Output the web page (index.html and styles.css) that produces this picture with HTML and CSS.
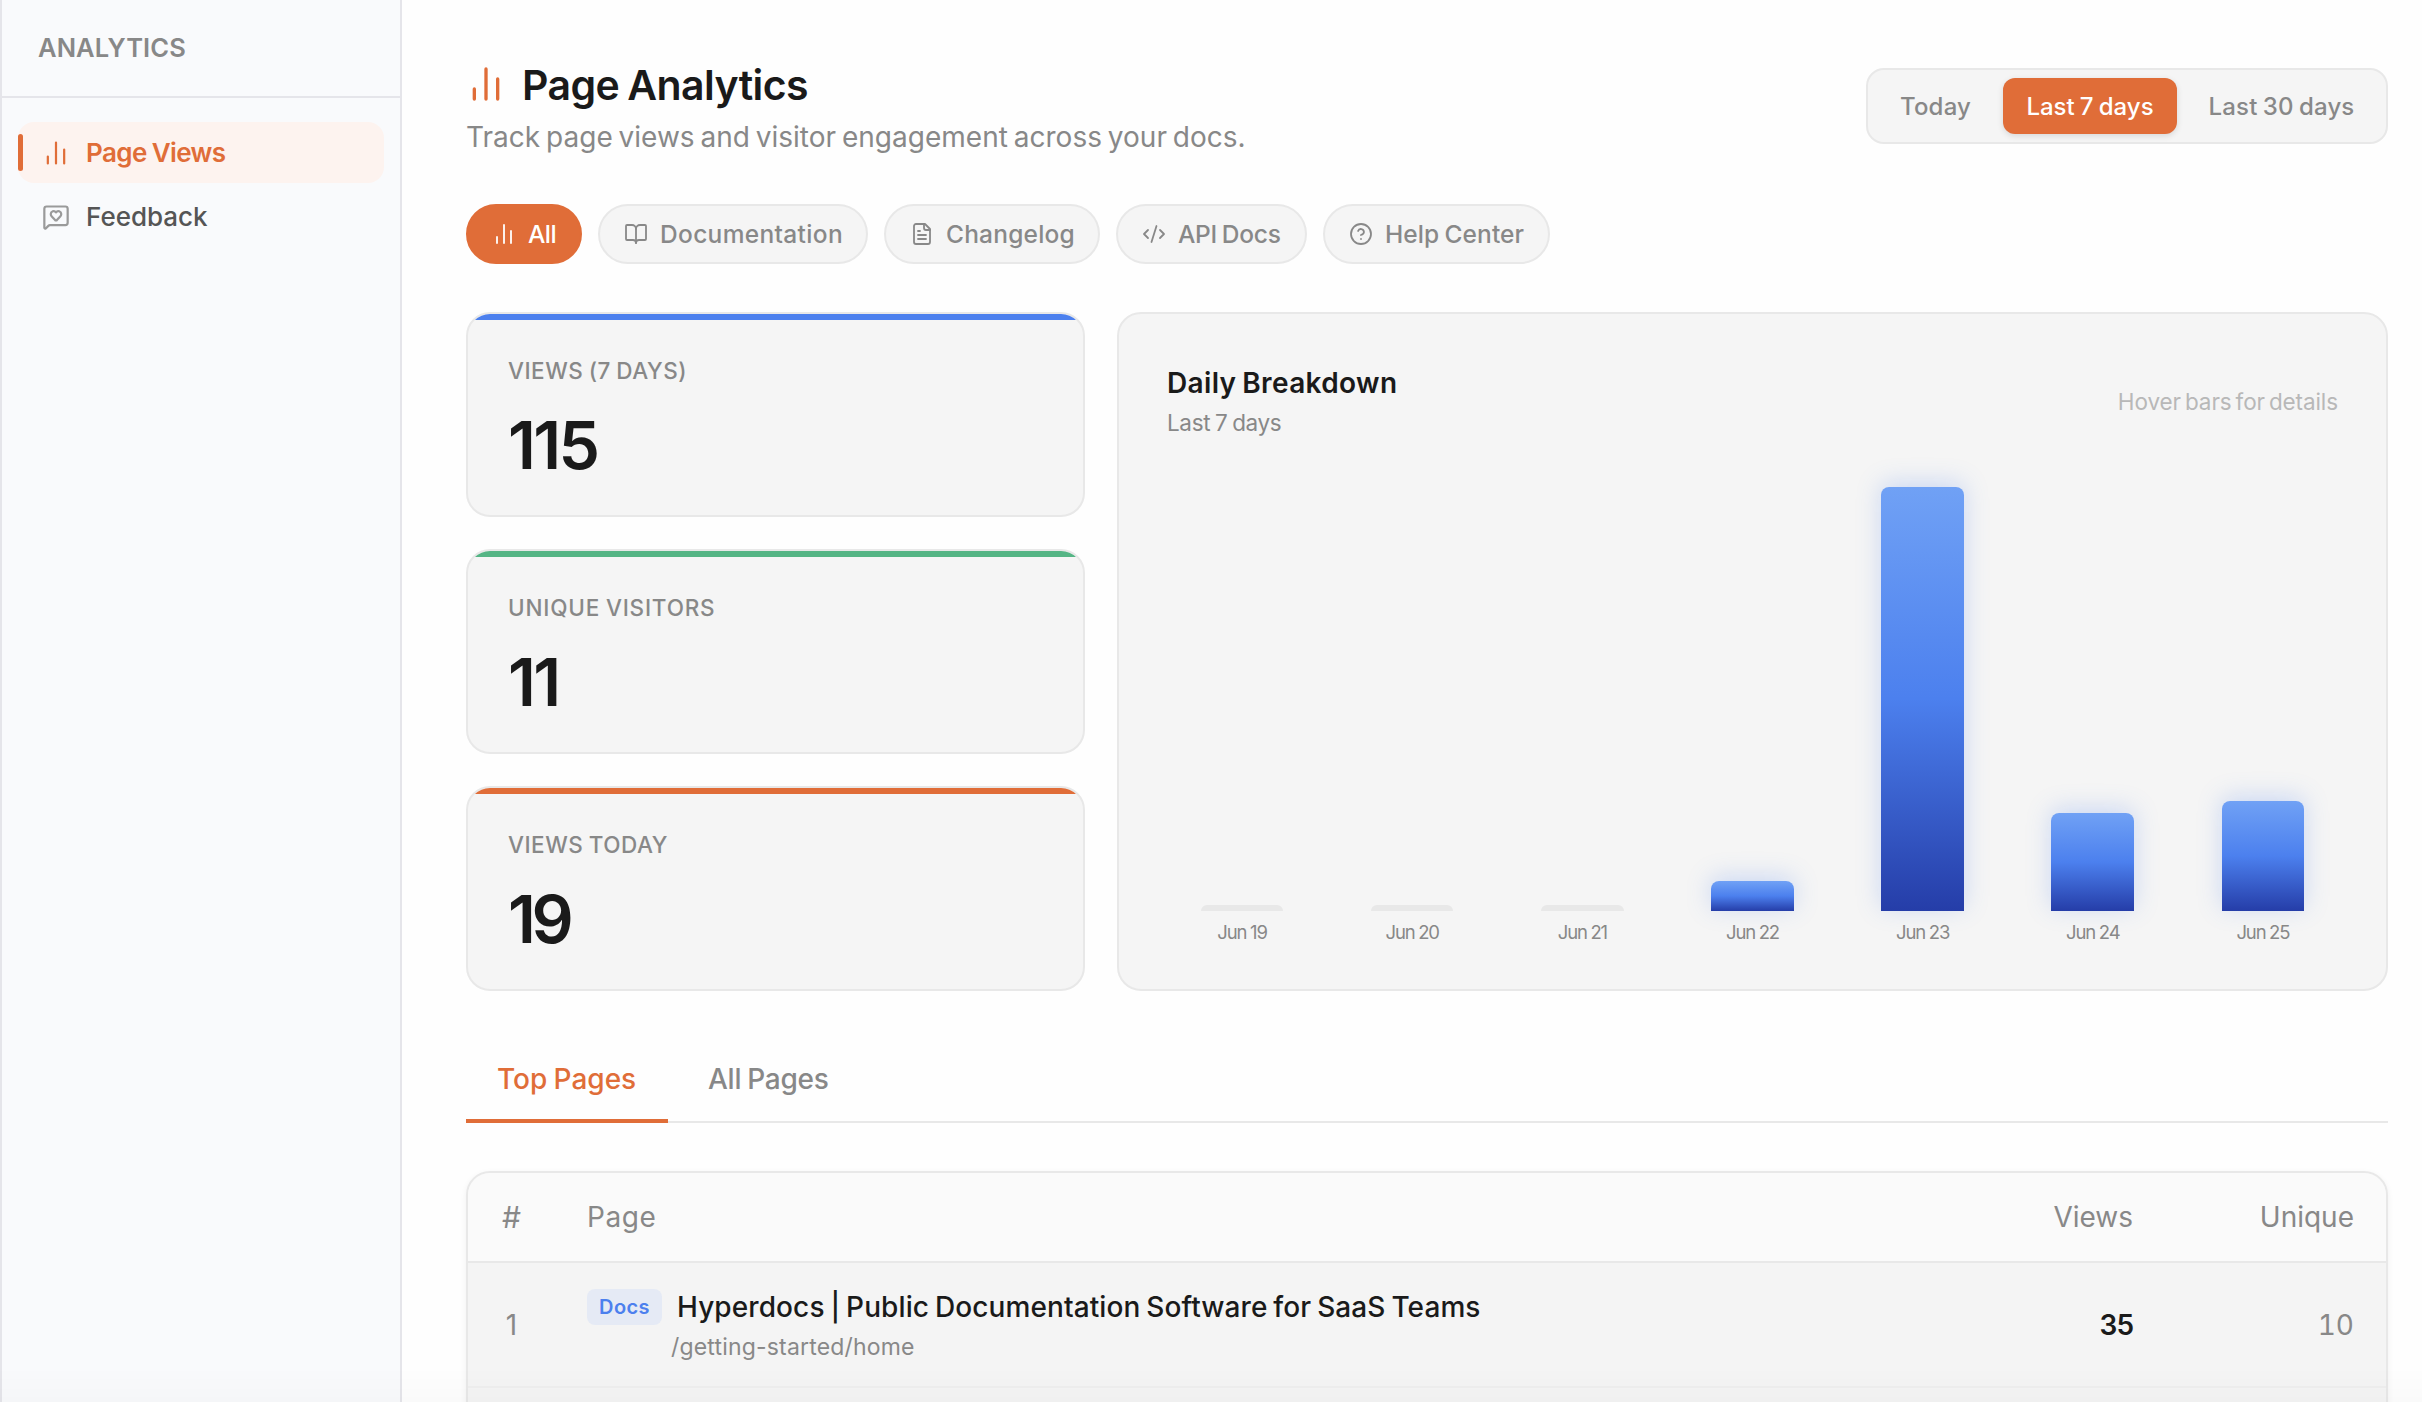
FILE: index.html
```html
<!DOCTYPE html>
<html lang="en">
<head>
<meta charset="utf-8">
<title>Page Analytics</title>
<link rel="stylesheet" href="styles.css">
</head>
<body>
<svg class="sprite" aria-hidden="true">
  <symbol id="i-chart" viewBox="0 0 24 24"><path d="M5 21v-6M12 21V3M19 21V9"/></symbol>
  <symbol id="i-feedback" viewBox="0 0 24 24"><path d="M22 17a2 2 0 0 1-2 2H6.828a2 2 0 0 0-1.414.586l-2.202 2.202A.71.71 0 0 1 2 21.286V5a2 2 0 0 1 2-2h16a2 2 0 0 1 2 2z"/><path d="M7.5 9.5c0 .687.265 1.383.697 1.844l3.009 3.264a1.14 1.14 0 0 0 .407.314 1 1 0 0 0 .783-.004 1.14 1.14 0 0 0 .398-.31l3.008-3.264A2.77 2.77 0 0 0 16.5 9.5 2.5 2.5 0 0 0 12 8a2.5 2.5 0 0 0-4.5 1.5"/></symbol>
  <symbol id="i-book" viewBox="0 0 24 24"><path d="M12 7v14"/><path d="M3 18a1 1 0 0 1-1-1V4a1 1 0 0 1 1-1h5a4 4 0 0 1 4 4 4 4 0 0 1 4-4h5a1 1 0 0 1 1 1v13a1 1 0 0 1-1 1h-6a3 3 0 0 0-3 3 3 3 0 0 0-3-3z"/></symbol>
  <symbol id="i-file" viewBox="0 0 24 24"><path d="M15 2H6a2 2 0 0 0-2 2v16a2 2 0 0 0 2 2h12a2 2 0 0 0 2-2V7z"/><path d="M14 2v4a2 2 0 0 0 2 2h4M10 9H8M16 13H8M16 17H8"/></symbol>
  <symbol id="i-code" viewBox="0 0 24 24"><path d="m18 16 4-4-4-4M6 8l-4 4 4 4M14.5 4l-5 16"/></symbol>
  <symbol id="i-help" viewBox="0 0 24 24"><circle cx="12" cy="12" r="10"/><path d="M9.09 9a3 3 0 0 1 5.83 1c0 2-3 3-3 3M12 17h.01"/></symbol>
</svg>

<div class="app">
  <aside class="sidebar">
    <div class="sidebar-head">ANALYTICS</div>
    <nav class="nav">
      <a class="nav-item active"><svg class="icon"><use href="#i-chart"/></svg><span>Page Views</span></a>
      <a class="nav-item"><svg class="icon"><use href="#i-feedback"/></svg><span>Feedback</span></a>
    </nav>
  </aside>

  <main class="main">
    <header class="header">
      <div>
        <h1 class="title"><svg class="icon"><use href="#i-chart"/></svg><span>Page Analytics</span></h1>
        <p class="subtitle">Track page views and visitor engagement across your docs.</p>
      </div>
      <div class="range">
        <button class="range-btn today">Today</button>
        <button class="range-btn week active">Last 7 days</button>
        <button class="range-btn month">Last 30 days</button>
      </div>
    </header>

    <div class="pills">
      <button class="pill all active"><svg class="icon"><use href="#i-chart"/></svg><span>All</span></button>
      <button class="pill docs"><svg class="icon"><use href="#i-book"/></svg><span>Documentation</span></button>
      <button class="pill changelog"><svg class="icon"><use href="#i-file"/></svg><span>Changelog</span></button>
      <button class="pill api"><svg class="icon"><use href="#i-code"/></svg><span>API Docs</span></button>
      <button class="pill help"><svg class="icon"><use href="#i-help"/></svg><span>Help Center</span></button>
    </div>

    <section class="overview">
      <div class="stats">
        <div class="stat blue"><div class="stat-label">VIEWS (7 DAYS)</div><div class="stat-value">115</div></div>
        <div class="stat green"><div class="stat-label unique">UNIQUE VISITORS</div><div class="stat-value">11</div></div>
        <div class="stat orange"><div class="stat-label">VIEWS TODAY</div><div class="stat-value tight">19</div></div>
      </div>
      <div class="chart">
        <div class="chart-head">
          <div>
            <h2 class="chart-title">Daily Breakdown</h2>
            <p class="chart-sub">Last 7 days</p>
          </div>
          <span class="chart-hint">Hover bars for details</span>
        </div>
        <div class="bars">
          <div class="day"><div class="bar empty"></div><span class="day-label">Jun 19</span></div>
          <div class="day"><div class="bar empty"></div><span class="day-label">Jun 20</span></div>
          <div class="day"><div class="bar empty"></div><span class="day-label">Jun 21</span></div>
          <div class="day"><div class="bar" style="height:30px"></div><span class="day-label">Jun 22</span></div>
          <div class="day"><div class="bar" style="height:424px"></div><span class="day-label">Jun 23</span></div>
          <div class="day"><div class="bar" style="height:98px"></div><span class="day-label">Jun 24</span></div>
          <div class="day"><div class="bar" style="height:110px"></div><span class="day-label">Jun 25</span></div>
        </div>
      </div>
    </section>

    <div class="tabs">
      <button class="tab top active">Top Pages</button>
      <button class="tab">All Pages</button>
    </div>

    <div class="table">
      <div class="row head">
        <span class="num hash">#</span><span class="page-h">Page</span><span class="r">Views</span><span class="r">Unique</span>
      </div>
      <div class="row body">
        <span class="num">1</span>
        <div class="page">
          <div class="page-line"><span class="badge">Docs</span><span class="page-title">Hyperdocs | Public Documentation Software for SaaS Teams</span></div>
          <div class="page-path">/getting-started/home</div>
        </div>
        <span class="r views">35</span>
        <span class="r uniq">10</span>
      </div>
      <div class="row body"></div>
    </div>
  </main>
  <div class="fade"></div>
</div>
</body>
</html>
```

FILE: styles.css
```css
:root {
  --orange: #e06d38;
  --muted: #888888;
  --ink: #1a1a1a;
  --line: #e8e8e8;
  --surface: #f5f5f5;
}
* { box-sizing: border-box; }
body {
  margin: 0;
  height: 1402px;
  overflow: hidden;
  background: #fefefe;
  color: var(--ink);
  font-family: Inter, "Liberation Sans", sans-serif;
}
h1, h2, p { margin: 0; }
button { font: inherit; border: 0; background: none; padding: 0; margin: 0; color: inherit; white-space: nowrap; }
.sprite { display: none; }
.icon {
  flex: none;
  width: 24px;
  height: 24px;
  fill: none;
  stroke: currentColor;
  stroke-width: 1.8;
  stroke-linecap: round;
  stroke-linejoin: round;
}
.app { display: flex; height: 1402px; overflow: hidden; }

/* Sidebar */
.sidebar {
  flex: none;
  width: 402px;
  background: #f9fafc;
  border: solid #e5e5ea;
  border-width: 0 2px;
}
.sidebar-head {
  height: 98px;
  padding-left: 36px;
  border-bottom: 2px solid #e5e5ea;
  font-size: 25.5px;
  font-weight: 600;
  letter-spacing: 0.1px;
  line-height: 96px;
  color: var(--muted);
}
.nav { display: flex; flex-direction: column; gap: 3px; padding: 24px 16px; }
.nav-item {
  position: relative;
  display: flex;
  align-items: center;
  gap: 16px;
  height: 61px;
  padding-left: 24px;
  border-radius: 16px;
  font-size: 26px;
  font-weight: 500;
  color: #555555;
}
.nav-item .icon { width: 28px; height: 28px; stroke-width: 1.9; color: #9a9a9a; }
.nav-item.active { background: #fdf3ef; color: var(--orange); font-weight: 600; letter-spacing: -0.6px; word-spacing: -1px; }
.nav-item.active .icon { color: var(--orange); }
.nav-item.active::before {
  content: "";
  position: absolute;
  left: 0;
  top: 12px;
  width: 5px;
  height: 37px;
  border-radius: 3px;
  background: var(--orange);
}

/* Header */
.main { flex: 1; min-width: 0; padding: 58px 34px 0 64px; }
.header { display: flex; justify-content: space-between; height: 99px; }
.title {
  display: flex;
  align-items: center;
  gap: 16px;
  height: 54px;
  font-size: 41px;
  font-weight: 600;
  letter-spacing: -0.6px;
  word-spacing: -1.5px;
}
.title .icon { width: 40px; height: 40px; margin-bottom: 2px; stroke-width: 2; color: var(--orange); }
.subtitle { margin-top: 5px; font-size: 28px; line-height: 40px; letter-spacing: 0.02px; word-spacing: -2.1px; color: var(--muted); }
.range {
  display: flex;
  gap: 8px;
  height: 76px;
  margin-top: 10px;
  padding: 8px;
  border: 2px solid var(--line);
  border-radius: 18px;
  background: var(--surface);
}
.range-btn { height: 56px; border-radius: 12px; font-size: 24px; font-weight: 500; letter-spacing: 0; word-spacing: -1.2px; color: var(--muted); }
.range-btn.today { width: 119px; letter-spacing: 0.2px; }
.range-btn.week { width: 174px; }
.range-btn.month { width: 193px; letter-spacing: 0.15px; }
.range-btn.active { background: var(--orange); color: #fff; box-shadow: 0 2px 6px rgba(0, 0, 0, 0.12); }

/* Filters */
.pills { display: flex; gap: 16px; margin-top: 47px; }
.pill {
  display: flex;
  align-items: center;
  gap: 12px;
  height: 60px;
  padding-left: 24px;
  border: 2px solid var(--line);
  border-radius: 30px;
  background: var(--surface);
  font-size: 24.5px;
  font-weight: 500;
  letter-spacing: 0.2px;
  word-spacing: -1.5px;
  color: var(--muted);
}
.pill.all { width: 116px; letter-spacing: -0.5px; }
.pill.docs { width: 270px; letter-spacing: 0.33px; }
.pill.changelog { width: 216px; }
.pill.api { width: 191px; letter-spacing: -0.25px; }
.pill.help { width: 227px; letter-spacing: 0.1px; }
.pill.active { background: var(--orange); border-color: var(--orange); color: #fff; }

/* Overview */
.overview { display: flex; gap: 32px; height: 679px; margin-top: 48px; }
.stats { flex: none; display: flex; flex-direction: column; gap: 32px; width: 619px; }
.stat {
  position: relative;
  overflow: hidden;
  height: 205px;
  padding: 42px 40px 0;
  border: 2px solid var(--line);
  border-radius: 24px;
  background: var(--surface);
}
.stat::before { content: ""; position: absolute; inset: 0 0 auto; height: 6px; }
.stat.blue::before { background: #4c80ee; }
.stat.green::before { background: #55b585; }
.stat.orange::before { background: var(--orange); }
.stat-label { font-size: 22.5px; font-weight: 500; line-height: 30px; letter-spacing: 0.5px; word-spacing: -1px; color: var(--muted); }
.stat-label.unique { letter-spacing: 0.8px; }
.stat-value { margin-top: 26px; font-size: 66px; font-weight: 600; line-height: 66px; letter-spacing: -2.6px; }
.stat-value.tight { letter-spacing: -4.5px; }

.chart {
  flex: 1;
  display: flex;
  flex-direction: column;
  padding: 51px 48px 45px;
  border: 2px solid var(--line);
  border-radius: 24px;
  background: var(--surface);
}
.chart-head { display: flex; justify-content: space-between; align-items: center; height: 72px; }
.chart-title { font-size: 28px; font-weight: 600; line-height: 36px; letter-spacing: 0.35px; word-spacing: -1.5px; }
.chart-sub { margin-top: 8px; font-size: 22.5px; line-height: 28px; letter-spacing: -0.35px; word-spacing: -1.2px; color: var(--muted); }
.chart-hint { font-size: 22.5px; letter-spacing: -0.1px; word-spacing: -2.2px; color: #b8b8b8; }
.bars { flex: 1; display: flex; align-items: flex-end; gap: 20px; }
.day { flex: 1; display: flex; flex-direction: column; align-items: center; }
.bar {
  width: 55%;
  border-radius: 8px 8px 0 0;
  background: linear-gradient(to bottom, #70a1f5 0%, #4c80ee 50%, #253da8 100%);
  box-shadow: 0 -4px 24px rgba(76, 128, 238, 0.25);
}
.bar.empty { height: 6px; border-radius: 6px 6px 0 0; background: #e8e8e8; box-shadow: none; }
.day-label { margin-top: 9px; font-size: 18.5px; line-height: 24px; letter-spacing: -1.1px; word-spacing: -0.5px; color: var(--muted); }

/* Tabs */
.tabs { display: flex; gap: 8px; height: 84px; margin-top: 48px; border-bottom: 2px solid var(--line); }
.tab { height: 84px; padding: 0 32px; border-bottom: 4px solid transparent; font-size: 28px; font-weight: 500; letter-spacing: -0.25px; word-spacing: -1.2px; color: var(--muted); }
.tab.top { width: 202px; padding: 0 34px 0 31px; letter-spacing: 0; }
.tab.active { color: var(--orange); border-color: var(--orange); }

/* Table */
.table {
  overflow: hidden;
  margin-top: 48px;
  border: 2px solid var(--line);
  border-radius: 24px;
  background: #f4f4f4;
  box-shadow: 0 2px 6px rgba(0, 0, 0, 0.06);
}
.row {
  display: grid;
  grid-template-columns: 87px 1fr 200px 221px;
  align-items: center;
  padding: 0 32px;
  font-size: 28px;
  color: var(--muted);
}
.row.head { height: 90px; border-bottom: 2px solid var(--line); background: #fafafa; }
.row.body { height: 125px; border-bottom: 2px solid #eeeeee; }
.num { width: 23px; text-align: center; }
.num.hash { font-size: 30px; }
.page-h { letter-spacing: 0.6px; }
.r { text-align: right; }
.page-line { display: flex; align-items: center; gap: 15px; height: 36px; }
.badge {
  width: 75px;
  height: 36px;
  border-radius: 8px;
  background: #e5eaf5;
  color: #4c80ee;
  font-size: 20px;
  font-weight: 600;
  letter-spacing: 0.4px;
  line-height: 36px;
  text-align: center;
}
.page-title { font-weight: 500; letter-spacing: 0.1px; word-spacing: -1.7px; color: var(--ink); white-space: nowrap; }
.page-path { margin: 8px 0 0 84px; font-size: 23px; line-height: 28px; letter-spacing: 0.18px; }
.views { font-weight: 600; letter-spacing: -1px; color: var(--ink); }
.uniq { font-variant-numeric: tabular-nums; }

/* Soft shade along the viewport's lower edge */
.fade {
  position: fixed;
  inset: auto 0 0;
  height: 36px;
  background: linear-gradient(to bottom, transparent, rgba(0, 0, 0, 0.015));
}
```
